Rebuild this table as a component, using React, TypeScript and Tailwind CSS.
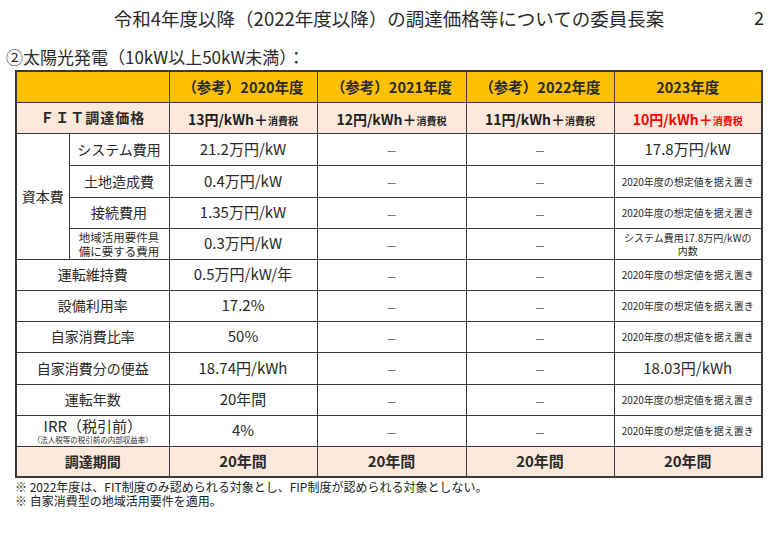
import React from 'react'

const font = { fontFamily: '"Noto Sans CJK JP", "Noto Sans", sans-serif' }

const note = '2020年度の想定値を据え置き'

interface Row {
  label: string
  sub?: string
  v2020: string
  v2023: string
  big2023?: boolean
  h: string
}

const rows: Row[] = [
  { label: '運転維持費', v2020: '0.5万円/kW/年', v2023: note, h: 'h-[31px]' },
  { label: '設備利用率', v2020: '17.2%', v2023: note, h: 'h-[31px]' },
  { label: '自家消費比率', v2020: '50%', v2023: note, h: 'h-[31px]' },
  { label: '自家消費分の便益', v2020: '18.74円/kWh', v2023: '18.03円/kWh', big2023: true, h: 'h-[32px]' },
  { label: '運転年数', v2020: '20年間', v2023: note, h: 'h-[31px]' },
  { label: 'IRR（税引前）', sub: '（法人税等の税引前の内部収益率）', v2020: '4%', v2023: note, h: 'h-[31px]' },
]

const capital = [
  { label: 'システム費用', v2020: '21.2万円/kW', v2023: '17.8万円/kW', big: true, h: 'h-[32px]' },
  { label: '土地造成費', v2020: '0.4万円/kW', v2023: note, big: false, h: 'h-[32px]' },
  { label: '接続費用', v2020: '1.35万円/kW', v2023: note, big: false, h: 'h-[31px]' },
]

const cell = 'border border-[#3a3a3a] text-center align-middle p-0'

function Dash() {
  return <span className="text-[11px] text-[#555]">－</span>
}

function Price({ yen, red }: { yen: string; red?: boolean }) {
  return (
    <span className={`font-bold text-[14px] ${red ? 'text-[#ff0000]' : 'text-[#222]'}`}>
      {yen}円/kWh＋<span className="text-[10px]">消費税</span>
    </span>
  )
}

export default function App() {
  return (
    <div className="w-[772px] h-[534px] bg-white text-[#2a2a2a] relative" style={font}>
      <div className="pt-[6px] flex justify-center">
        <h1 className="text-[18.5px] leading-[24px] pl-[6px]">令和4年度以降（2022年度以降）の調達価格等についての委員長案</h1>
      </div>
      <span className="absolute right-[8px] top-[5px] text-[18px] leading-[24px]">2</span>

      <p className="mt-[17px] ml-[6px] text-[17px] leading-[20px]">②太陽光発電（10kW以上50kW未満）：</p>

      <table className="ml-[15px] mt-[3px] border-collapse table-fixed w-[746px] border-2 border-[#3a3a3a]">
        <colgroup>
          <col className="w-[53px]" />
          <col className="w-[100px]" />
          <col className="w-[148px]" />
          <col className="w-[149px]" />
          <col className="w-[148px]" />
          <col className="w-[148px]" />
        </colgroup>
        <tbody>
          <tr className="h-[31px] bg-[#ffc000] text-[14.5px] font-bold">
            <td className={cell} colSpan={2}></td>
            <td className={cell}>（参考）2020年度</td>
            <td className={cell}>（参考）2021年度</td>
            <td className={cell}>（参考）2022年度</td>
            <td className={cell}>2023年度</td>
          </tr>
          <tr className="h-[31px] bg-[#fde9dc]">
            <td className={`${cell} font-bold text-[14px] tracking-[1px]`} colSpan={2}>ＦＩＴ調達価格</td>
            <td className={cell}><Price yen="13" /></td>
            <td className={cell}><Price yen="12" /></td>
            <td className={cell}><Price yen="11" /></td>
            <td className={cell}><Price yen="10" red /></td>
          </tr>
          {capital.map((r, i) => (
            <tr key={r.label} className={r.h}>
              {i === 0 && (
                <td className={`${cell} text-[14px]`} rowSpan={4}>資本費</td>
              )}
              <td className={`${cell} text-[14px]`}>{r.label}</td>
              <td className={`${cell} text-[15px]`}>{r.v2020}</td>
              <td className={cell}><Dash /></td>
              <td className={cell}><Dash /></td>
              <td className={`${cell} ${r.big ? 'text-[15px]' : 'text-[10px]'}`}>{r.v2023}</td>
            </tr>
          ))}
          <tr className="h-[31px]">
            <td className={`${cell} text-[11.5px] leading-[14px]`}>地域活用要件具<br />備に要する費用</td>
            <td className={`${cell} text-[15px]`}>0.3万円/kW</td>
            <td className={cell}><Dash /></td>
            <td className={cell}><Dash /></td>
            <td className={`${cell} text-[10px] leading-[13px]`}>システム費用17.8万円/kWの<br />内数</td>
          </tr>
          {rows.map((r) => (
            <tr key={r.label} className={r.h}>
              <td className={`${cell} text-[14px]`} colSpan={2}>
                {r.sub ? (
                  <div className="flex flex-col items-center">
                    <span className="text-[15px] leading-[18px]">{r.label}</span>
                    <span className="text-[7.5px] leading-[10px]">{r.sub}</span>
                  </div>
                ) : (
                  r.label
                )}
              </td>
              <td className={`${cell} text-[15px]`}>{r.v2020}</td>
              <td className={cell}><Dash /></td>
              <td className={cell}><Dash /></td>
              <td className={`${cell} ${r.big2023 ? 'text-[15px]' : 'text-[10px]'}`}>{r.v2023}</td>
            </tr>
          ))}
          <tr className="h-[31px] bg-[#fde9dc] font-bold">
            <td className={`${cell} text-[14px]`} colSpan={2}>調達期間</td>
            <td className={`${cell} text-[15px]`}>20年間</td>
            <td className={`${cell} text-[15px]`}>20年間</td>
            <td className={`${cell} text-[15px]`}>20年間</td>
            <td className={`${cell} text-[15px]`}>20年間</td>
          </tr>
        </tbody>
      </table>

      <div className="ml-[15px] mt-[2px] text-[12px] leading-[14px] text-[#222]">
        <p>※ 2022年度は、FIT制度のみ認められる対象とし、FIP制度が認められる対象としない。</p>
        <p>※ 自家消費型の地域活用要件を適用。</p>
      </div>
    </div>
  )
}
